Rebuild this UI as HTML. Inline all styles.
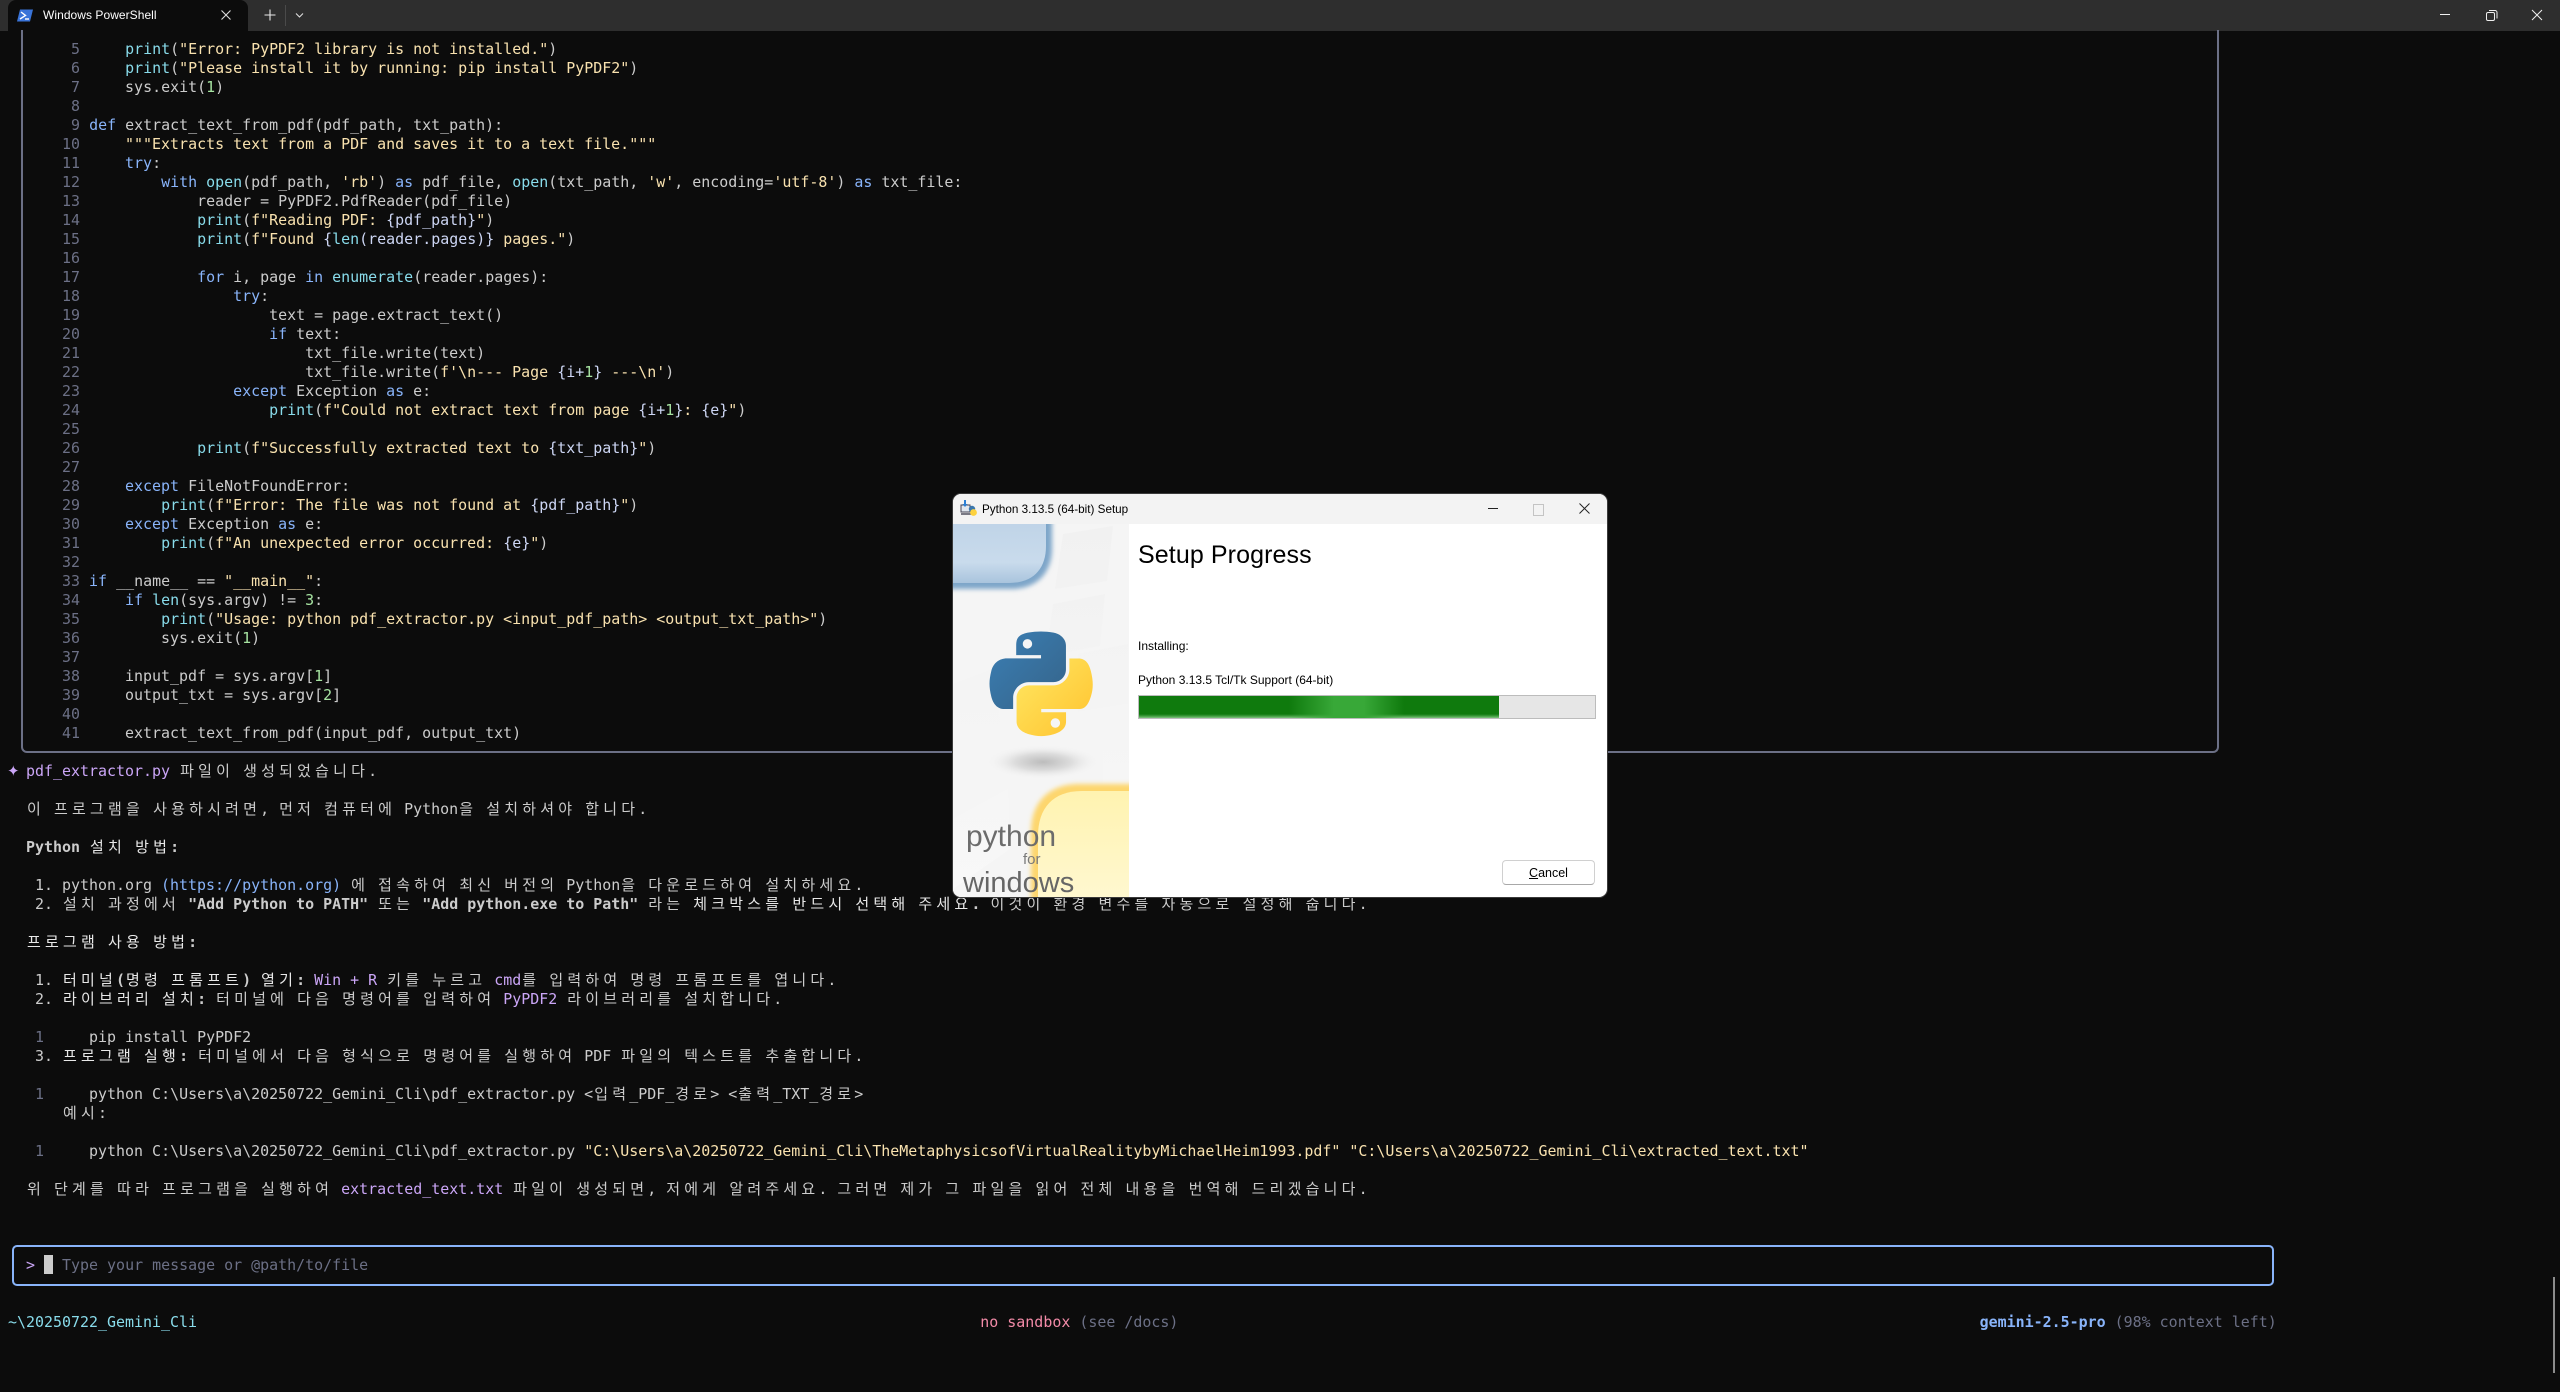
<!DOCTYPE html>
<html lang="ko"><head><meta charset="utf-8"><title>Windows PowerShell</title>
<style>
html,body{margin:0;padding:0;width:2560px;height:1392px;overflow:hidden;background:#0c0c0c}
body{position:relative;font-family:"DejaVu Sans Mono","Liberation Mono","Noto Sans CJK KR",monospace}
#bar{position:absolute;left:0;top:0;width:2560px;height:31px;background:#2e2e2e}
#tab{position:absolute;left:8px;top:0;width:240px;height:31px;background:#0c0c0c;border-radius:8px 8px 0 0}
.ui{font-family:"Liberation Sans",sans-serif;position:absolute;white-space:pre}
#term{position:absolute;left:8px;top:40px;font-size:14.96px;color:#cccccc}
#term p{margin:0;height:19px;line-height:19px;overflow:visible;white-space:pre}
.k{color:#89b4fa}.c{color:#89dceb}.s{color:#f9e2af}.g{color:#a6e3a1}.n{color:#6c7086}.v{color:#cdd6f4}.p{color:#cba6f7}.r{color:#f38ba8}
i{font-style:normal;font-family:"Noto Sans CJK KR","NanumGothic",sans-serif;font-size:15px;line-height:0;letter-spacing:4.2px;position:relative;left:1px;font-weight:400}
b i{font-weight:400;color:#e8e8e8}
#star{display:inline-block;width:9px;font-family:"DejaVu Sans",sans-serif;font-size:15px;line-height:0;position:relative;left:-1px}
#box{position:absolute;left:21px;top:30px;width:2194px;height:721px;border:2px solid #6c7086;border-top:0;border-radius:0 0 6px 6px}
#inp{position:absolute;left:12px;top:1245px;width:2258px;height:37px;border:2px solid #89b4fa;border-radius:5px}
#cur{position:absolute;left:44px;top:1255px;width:9px;height:19px;background:#cccccc}
#sb{position:absolute;left:2553px;top:1277px;width:2px;height:96px;background:#8c8c8c}
#dlg{position:absolute;left:953px;top:494px;width:654px;height:403px;background:#fff;border-radius:8px;overflow:hidden;box-shadow:0 0 0 1px #3a3a3a}
#dt{position:absolute;left:0;top:0;width:654px;height:30px;background:#f3f3f3}
#lp{position:absolute;left:0;top:30px;width:176px;height:373px;overflow:hidden;background:#f4f4f4}
.d{color:#000;font-size:12px;line-height:16px}
</style></head><body>
<div id="bar"></div>
<div id="tab"></div>
<svg style="position:absolute;left:16px;top:8px" width="18" height="15" viewBox="0 0 18 15"><path d="M4 1.5h13l-3 12H1z" fill="#3a74d9"/><path d="M5 4l4.5 3.5L4 11" fill="none" stroke="#fff" stroke-width="1.4"/><path d="M9 11h4" stroke="#fff" stroke-width="1.4"/></svg>
<div class="ui" style="left:43px;top:7px;font-size:12px;line-height:16px;color:#fff;letter-spacing:.05px">Windows PowerShell</div>
<svg style="position:absolute;left:220px;top:9px" width="12" height="12"><path d="M1.5 1.5l9 9M10.5 1.5l-9 9" stroke="#ddd" stroke-width="1.1"/></svg>
<svg style="position:absolute;left:264px;top:9px" width="12" height="12"><path d="M6 .5v11M.5 6h11" stroke="#e8e8e8" stroke-width="1.1"/></svg>
<div style="position:absolute;left:285px;top:5px;width:1px;height:21px;background:#4a4a4a"></div>
<svg style="position:absolute;left:295px;top:12px" width="9" height="7"><path d="M1 1.5l3.5 3.5L8 1.5" fill="none" stroke="#ddd" stroke-width="1.1"/></svg>
<div style="position:absolute;left:2440px;top:14px;width:10px;height:1px;background:#f0f0f0"></div>
<svg style="position:absolute;left:2485px;top:9px" width="13" height="13"><path d="M4 1.5h6a2 2 0 0 1 2 2v6" fill="none" stroke="#eee"/><rect x="1.5" y="3.5" width="8" height="8" rx="1.5" fill="none" stroke="#eee"/></svg>
<svg style="position:absolute;left:2531px;top:9px" width="12" height="12"><path d="M1 1l10 10M11 1L1 11" stroke="#eee" stroke-width="1"/></svg>

<div id="box"></div>
<div id="inp"></div>
<div id="cur"></div>
<div id="sb"></div>

<div id="term">
<p>       <span class="n">5</span>     <span class="c">print</span>(<span class="s">"Error: PyPDF2 library is not installed."</span>)</p>
<p>       <span class="n">6</span>     <span class="c">print</span>(<span class="s">"Please install it by running: pip install PyPDF2"</span>)</p>
<p>       <span class="n">7</span>     sys.exit(<span class="g">1</span>)</p>
<p>       <span class="n">8</span></p>
<p>       <span class="n">9</span> <span class="k">def</span> extract_text_from_pdf(pdf_path, txt_path):</p>
<p>      <span class="n">10</span>     <span class="s">"""Extracts text from a PDF and saves it to a text file."""</span></p>
<p>      <span class="n">11</span>     <span class="k">try</span>:</p>
<p>      <span class="n">12</span>         <span class="k">with</span> <span class="c">open</span>(pdf_path, <span class="s">'rb'</span>) <span class="k">as</span> pdf_file, <span class="c">open</span>(txt_path, <span class="s">'w'</span>, encoding=<span class="s">'utf-8'</span>) <span class="k">as</span> txt_file:</p>
<p>      <span class="n">13</span>             reader = PyPDF2.PdfReader(pdf_file)</p>
<p>      <span class="n">14</span>             <span class="c">print</span>(<span class="s">f"Reading PDF: </span><span class="v">{pdf_path}</span><span class="s">"</span>)</p>
<p>      <span class="n">15</span>             <span class="c">print</span>(<span class="s">f"Found </span><span class="v">{</span><span class="c">len</span><span class="v">(reader.pages)}</span><span class="s"> pages."</span>)</p>
<p>      <span class="n">16</span></p>
<p>      <span class="n">17</span>             <span class="k">for</span> i, page <span class="k">in</span> <span class="c">enumerate</span>(reader.pages):</p>
<p>      <span class="n">18</span>                 <span class="k">try</span>:</p>
<p>      <span class="n">19</span>                     text = page.extract_text()</p>
<p>      <span class="n">20</span>                     <span class="k">if</span> text:</p>
<p>      <span class="n">21</span>                         txt_file.write(text)</p>
<p>      <span class="n">22</span>                         txt_file.write(<span class="s">f'\n--- Page </span><span class="v">{i+<span class="g">1</span>}</span><span class="s"> ---\n'</span>)</p>
<p>      <span class="n">23</span>                 <span class="k">except</span> Exception <span class="k">as</span> e:</p>
<p>      <span class="n">24</span>                     <span class="c">print</span>(<span class="s">f"Could not extract text from page </span><span class="v">{i+<span class="g">1</span>}</span><span class="s">: </span><span class="v">{e}</span><span class="s">"</span>)</p>
<p>      <span class="n">25</span></p>
<p>      <span class="n">26</span>             <span class="c">print</span>(<span class="s">f"Successfully extracted text to </span><span class="v">{txt_path}</span><span class="s">"</span>)</p>
<p>      <span class="n">27</span></p>
<p>      <span class="n">28</span>     <span class="k">except</span> FileNotFoundError:</p>
<p>      <span class="n">29</span>         <span class="c">print</span>(<span class="s">f"Error: The file was not found at </span><span class="v">{pdf_path}</span><span class="s">"</span>)</p>
<p>      <span class="n">30</span>     <span class="k">except</span> Exception <span class="k">as</span> e:</p>
<p>      <span class="n">31</span>         <span class="c">print</span>(<span class="s">f"An unexpected error occurred: </span><span class="v">{e}</span><span class="s">"</span>)</p>
<p>      <span class="n">32</span></p>
<p>      <span class="n">33</span> <span class="k">if</span> __name__ == <span class="s">"__main__"</span>:</p>
<p>      <span class="n">34</span>     <span class="k">if</span> <span class="c">len</span>(sys.argv) != <span class="g">3</span>:</p>
<p>      <span class="n">35</span>         <span class="c">print</span>(<span class="s">"Usage: python pdf_extractor.py &lt;input_pdf_path&gt; &lt;output_txt_path&gt;"</span>)</p>
<p>      <span class="n">36</span>         sys.exit(<span class="g">1</span>)</p>
<p>      <span class="n">37</span></p>
<p>      <span class="n">38</span>     input_pdf = sys.argv[<span class="g">1</span>]</p>
<p>      <span class="n">39</span>     output_txt = sys.argv[<span class="g">2</span>]</p>
<p>      <span class="n">40</span></p>
<p>      <span class="n">41</span>     extract_text_from_pdf(input_pdf, output_txt)</p>
<p></p>
<p><span class="p"><span id="star">✦</span> pdf_extractor.py</span> <i>파일이</i> <i>생성되었습니다</i>.</p>
<p></p>
<p>  <i>이</i> <i>프로그램을</i> <i>사용하시려면</i>, <i>먼저</i> <i>컴퓨터에</i> Python<i>을</i> <i>설치하셔야</i> <i>합니다</i>.</p>
<p></p>
<p><b>  Python <i>설치</i> <i>방법</i>:</b></p>
<p></p>
<p>   1. python.org <span class="k">(https://python.org)</span> <i>에</i> <i>접속하여</i> <i>최신</i> <i>버전의</i> Python<i>을</i> <i>다운로드하여</i> <i>설치하세요</i>.</p>
<p>   2. <i>설치</i> <i>과정에서</i> <b>"Add Python to PATH"</b> <i>또는</i> <b>"Add python.exe to Path"</b> <i>라는</i> <b><i>체크박스를</i> <i>반드시</i> <i>선택해</i> <i>주세요</i>.</b> <i>이것이</i> <i>환경</i> <i>변수를</i> <i>자동으로</i> <i>설정해</i> <i>줍니다</i>.</p>
<p></p>
<p><b>  <i>프로그램</i> <i>사용</i> <i>방법</i>:</b></p>
<p></p>
<p>   1. <b><i>터미널</i>(<i>명령</i> <i>프롬프트</i>) <i>열기</i>:</b> <span class="p">Win + R</span> <i>키를</i> <i>누르고</i> <span class="p">cmd</span><i>를</i> <i>입력하여</i> <i>명령</i> <i>프롬프트를</i> <i>엽니다</i>.</p>
<p>   2. <b><i>라이브러리</i> <i>설치</i>:</b> <i>터미널에</i> <i>다음</i> <i>명령어를</i> <i>입력하여</i> <span class="p">PyPDF2</span> <i>라이브러리를</i> <i>설치합니다</i>.</p>
<p></p>
<p>   <span class="n">1</span>     pip install PyPDF2</p>
<p>   3. <b><i>프로그램</i> <i>실행</i>:</b> <i>터미널에서</i> <i>다음</i> <i>형식으로</i> <i>명령어를</i> <i>실행하여</i> PDF <i>파일의</i> <i>텍스트를</i> <i>추출합니다</i>.</p>
<p></p>
<p>   <span class="n">1</span>     python C:\Users\a\20250722_Gemini_Cli\pdf_extractor.py &lt;<i>입력</i>_PDF_<i>경로</i>&gt; &lt;<i>출력</i>_TXT_<i>경로</i>&gt;</p>
<p>      <i>예시</i>:</p>
<p></p>
<p>   <span class="n">1</span>     python C:\Users\a\20250722_Gemini_Cli\pdf_extractor.py <span class="s">"C:\Users\a\20250722_Gemini_Cli\TheMetaphysicsofVirtualRealitybyMichaelHeim1993.pdf"</span> <span class="s">"C:\Users\a\20250722_Gemini_Cli\extracted_text.txt"</span></p>
<p></p>
<p>  <i>위</i> <i>단계를</i> <i>따라</i> <i>프로그램을</i> <i>실행하여</i> <span class="p">extracted_text.txt</span> <i>파일이</i> <i>생성되면</i>, <i>저에게</i> <i>알려주세요</i>. <i>그러면</i> <i>제가</i> <i>그</i> <i>파일을</i> <i>읽어</i> <i>전체</i> <i>내용을</i> <i>번역해</i> <i>드리겠습니다</i>.</p>
<p></p>
<p></p>
<p></p>
<p>  <span class="p">&gt;</span>   <span class="n">Type your message or @path/to/file</span></p>
<p></p>
<p></p>
<p><span class="c">~\20250722_Gemini_Cli</span>                                                                                       <span class="r">no sandbox</span> <span class="n">(see /docs)</span>                                                                                         <span class="k"><b>gemini-2.5-pro</b></span> <span class="n">(98% context left)</span></p>
</div>

<div id="dlg">
<div id="dt"></div>
<svg style="position:absolute;left:7px;top:6px" width="18" height="18" viewBox="0 0 18 18"><rect x="1" y="5" width="9" height="7" fill="#dfe6ee" stroke="#445" stroke-width="1"/><path d="M1 14h10" stroke="#445" stroke-width="1.4"/><path d="M5 0v6" stroke="#2a7fd5" stroke-width="2"/><path d="M2.5 4L5 7l2.5-3z" fill="#2a7fd5"/><circle cx="12" cy="9" r="3.2" fill="#3a77ad"/><circle cx="13.5" cy="12.5" r="3.4" fill="#fdd23e"/></svg>
<div class="ui d" style="left:29px;top:8px;font-size:11.7px">Python 3.13.5 (64-bit) Setup</div>
<div style="position:absolute;left:535px;top:14px;width:10px;height:1px;background:#222"></div>
<div style="position:absolute;left:580px;top:10px;width:9px;height:10px;border:1px solid #c4c4c4"></div>
<svg style="position:absolute;left:626px;top:9px" width="11" height="11"><path d="M.5.5l10 10M10.5.5l-10 10" stroke="#222" stroke-width="1"/></svg>

<div id="lp">
<svg width="176" height="373" viewBox="0 0 176 373" style="position:absolute;left:0;top:0">
<defs>
<linearGradient id="lb" x1="0" y1="0" x2="0" y2="1"><stop offset="0" stop-color="#bdd2e6"/><stop offset=".7" stop-color="#c9dbec"/><stop offset="1" stop-color="#a9c4dd"/></linearGradient>
<linearGradient id="ly" x1="0" y1="0" x2="0" y2="1"><stop offset="0" stop-color="#fff3b0"/><stop offset="1" stop-color="#fff9d8"/></linearGradient>
<linearGradient id="pb" x1="0" y1="0" x2="1" y2="1"><stop offset="0" stop-color="#3b7fb5"/><stop offset="1" stop-color="#356388"/></linearGradient>
<linearGradient id="py" x1="0" y1="0" x2="1" y2="1"><stop offset="0" stop-color="#ffe863"/><stop offset="1" stop-color="#ffc22e"/></linearGradient>
<linearGradient id="fa" x1="0" y1="0" x2="0" y2="1"><stop offset="0" stop-color="#f1f1f1"/><stop offset="1" stop-color="#f8f8f8"/></linearGradient>
<radialGradient id="sh"><stop offset="0" stop-color="#bcbcbc"/><stop offset=".5" stop-color="#dcdcdc"/><stop offset="1" stop-color="#f4f4f4" stop-opacity="0"/></radialGradient>
<filter id="bl"><feGaussianBlur stdDeviation="2.5"/></filter>
</defs>
<rect width="176" height="373" fill="#f5f5f5"/>
<path d="M110 10l50-8-6 55-52 8zM100 80l52-10-5 52-54 10zM0 160l40-15 10 70-50 12zM0 295l55-30 2 60-57 40zM125 130l50-10v60l-50 8zM130 350l46-18v41h-52zM150 210l26-8v60l-26 8z" fill="url(#fa)"/>
<path d="M-10-10H99v34c0 26-16 41-41 41H-10z" fill="#7ea6c9" filter="url(#bl)"/>
<path d="M-10-10H93v32c0 24-14 37-37 37H-10z" fill="url(#lb)"/>
<path d="M78 400V308c0-30 18-48 48-48h60v140z" fill="#fdd66d" filter="url(#bl)"/>
<path d="M85 400V312c0-28 15-45 44-45h58v134z" fill="url(#ly)"/>
<ellipse cx="90" cy="238" rx="56" ry="17" fill="url(#sh)"/>
<g transform="translate(35.5 107.5) scale(.955)">
<path fill="url(#pb)" d="M54.9 0c-4.6 0-8.9.4-12.7 1.1C31 3.1 29 7.2 29 14.8v10h26v3.4H19.2C11.6 28.2 5 32.8 2.9 41.5c-2.4 9.9-2.5 16.1 0 26.5C4.8 75.7 9.2 81.2 16.8 81.2h9v-12c0-8.6 7.5-16.2 16.3-16.2h26c7.2 0 13-6 13-13.2V14.8c0-7.1-6-12.4-13-13.6C63.6.4 59 0 54.9 0zM40.8 8c2.7 0 4.9 2.2 4.9 5 0 2.7-2.2 4.9-4.9 4.9-2.7 0-4.9-2.2-4.9-4.9 0-2.8 2.2-5 4.9-5z"/>
<path fill="url(#py)" d="M84.7 28.2v11.6c0 9-7.6 16.6-16.3 16.6h-26c-7.1 0-13 6.1-13 13.2v24.8c0 7.1 6.2 11.2 13 13.2 8.2 2.4 16 2.8 25.8 0 6.5-1.9 13-5.7 13-13.2V84.5h-26v-3.3h39c7.6 0 10.4-5.3 13-13.2 2.7-8.2 2.6-16 0-26.5-1.9-7.6-5.4-13.2-13-13.2h-9.5zM70 90.9c2.7 0 4.9 2.2 4.9 4.9 0 2.8-2.2 5-4.9 5-2.7 0-4.9-2.2-4.9-5 0-2.7 2.2-4.9 4.9-4.9z"/>
</g>
</svg>
<div class="ui" style="left:13px;top:295px;font-size:30px;line-height:36px;color:#6c6c6c">python</div>
<div class="ui" style="left:70px;top:327px;font-size:15px;line-height:18px;color:#7a7a7a">for</div>
<div class="ui" style="left:10px;top:341px;font-size:29px;line-height:36px;color:#666">windows</div>
</div>

<div class="ui" style="left:185px;top:46px;font-size:25px;line-height:31px;color:#000;letter-spacing:.1px">Setup Progress</div>
<div class="ui d" style="left:185px;top:144px">Installing:</div>
<div class="ui d" style="left:185px;top:178px">Python 3.13.5 Tcl/Tk Support (64-bit)</div>
<div style="position:absolute;left:185px;top:201px;width:456px;height:22px;background:#e6e6e6;border:1px solid #bcbcbc">
<div style="position:absolute;left:0;top:0;width:360px;height:22px;background:linear-gradient(90deg,rgba(58,170,58,0) 0,rgba(58,170,58,0) 150px,#38a838 195px,#38a838 225px,rgba(58,170,58,0) 265px),linear-gradient(180deg,#0f7a0d 0,#0f7a0d 18px,#3d9a3c 20px,#7fc57e 22px)"></div>
</div>
<div class="ui" style="left:549px;top:366px;width:91px;height:23px;background:#fff;border:1px solid #d0d0d0;border-bottom-color:#a8a8a8;border-radius:4px;font-size:12.5px;line-height:24px;text-align:center;color:#000"><span style="text-decoration:underline">C</span>ancel</div>
</div>
</body></html>
